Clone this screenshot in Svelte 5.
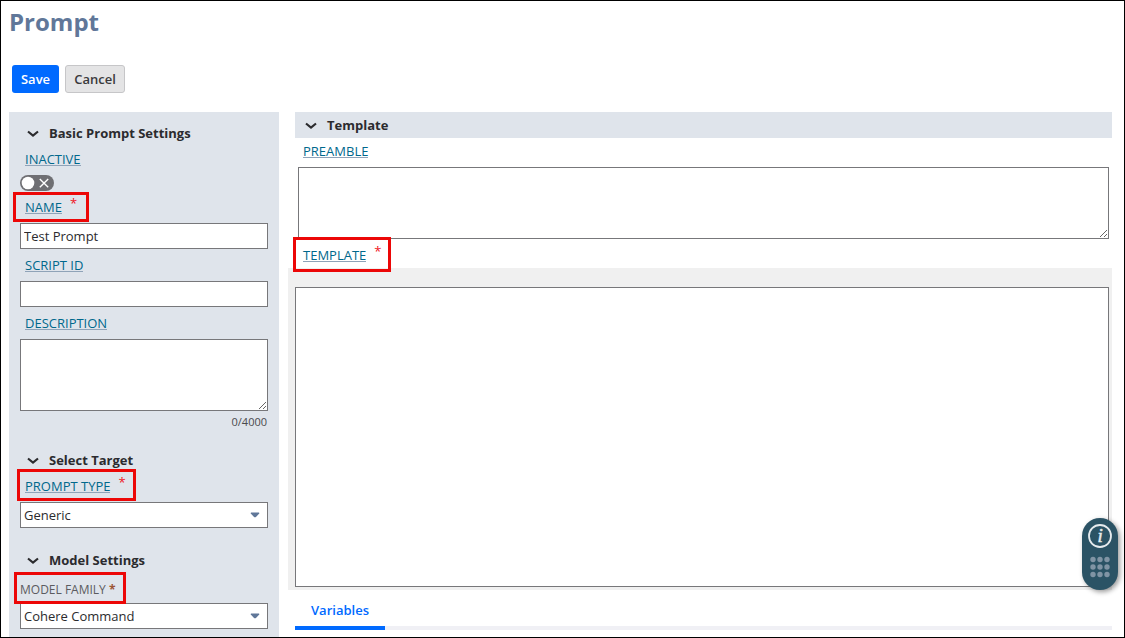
<script>
	let name = $state("Test Prompt");
	let scriptId = $state("");
	let description = $state("");
	let preamble = $state("");
	let template = $state("");
	let inactive = $state(false);
</script>

{#snippet heading(title)}
	<div class="heading">
		<svg class="chevron" width="12" height="8" viewBox="0 0 12 8">
			<path d="M1 1.5 L6 5.5 L11 1.5" fill="none" stroke="#2b2b2e" stroke-width="2.2" />
		</svg>
		<span>{title}</span>
	</div>
{/snippet}

{#snippet select(value)}
	<div class="control select">
		<span>{value}</span>
		<svg width="10" height="6" viewBox="0 0 10 6">
			<path d="M1.2 0.5 H8.8 Q9.8 1 8.8 2 L6.2 4.7 Q5 5.7 3.8 4.7 L1.2 2 Q0.2 1 1.2 0.5 Z" fill="#607799" />
		</svg>
	</div>
{/snippet}

<div class="page">
	<h1>Prompt</h1>

	<div class="buttons">
		<button class="save">Save</button>
		<button class="cancel">Cancel</button>
	</div>

	<div class="columns">
		<aside>
			{@render heading("Basic Prompt Settings")}
			<div class="field">
				<div class="label"><a href="#inactive">INACTIVE</a></div>
				<button class="toggle" aria-label="Inactive" onclick={() => (inactive = !inactive)}>
					<svg width="34" height="16" viewBox="0 0 34 16">
						<circle cx="8" cy="8" r="6.3" fill="#fff" />
						<path d="M19.8 4 L28.2 12.2 M28.2 4 L19.8 12.2" stroke="#fff" stroke-width="1.4" />
					</svg>
				</button>
			</div>
			<div class="field">
				<div class="label">
					<a href="#name">NAME</a><span class="star">*</span>
					<i class="mark mark-name"></i>
				</div>
				<input class="control" bind:value={name} aria-label="Name" />
			</div>
			<div class="field">
				<div class="label"><a href="#script-id">SCRIPT ID</a></div>
				<input class="control" bind:value={scriptId} aria-label="Script ID" />
			</div>
			<div class="field">
				<div class="label"><a href="#description">DESCRIPTION</a></div>
				<textarea bind:value={description} aria-label="Description"></textarea>
				<div class="counter">{description.length}/4000</div>
			</div>

			<section class="target">
				{@render heading("Select Target")}
				<div class="label">
					<a href="#prompt-type">PROMPT TYPE</a><span class="star">*</span>
					<i class="mark mark-type"></i>
				</div>
				{@render select("Generic")}
			</section>

			<section class="model">
				{@render heading("Model Settings")}
				<div class="label plain">
					<span>MODEL FAMILY <b>*</b></span>
					<i class="mark mark-family"></i>
				</div>
				{@render select("Cohere Command")}
			</section>
		</aside>

		<main>
			<div class="bar">{@render heading("Template")}</div>
			<div class="label"><a href="#preamble">PREAMBLE</a></div>
			<textarea class="preamble" bind:value={preamble} aria-label="Preamble"></textarea>
			<div class="label">
				<a href="#template">TEMPLATE</a><span class="star">*</span>
				<i class="mark mark-template"></i>
			</div>
			<div class="editor">
				<textarea bind:value={template} aria-label="Template"></textarea>
			</div>
			<div class="tabs">
				<div class="tab">Variables</div>
			</div>
		</main>
	</div>

	<div class="helper">
		<svg width="36" height="72" viewBox="0 0 36 72">
			<circle cx="18" cy="18" r="11" fill="none" stroke="#e6ebee" stroke-width="1.8" />
			<text x="18.2" y="24" text-anchor="middle">i</text>
			{#each [41.5, 49, 56.5] as cy}
				{#each [11, 18, 25] as cx}
					<circle {cx} {cy} r="2.7" fill="#8094a4" />
				{/each}
			{/each}
		</svg>
	</div>
</div>

<style>
	:global(body) {
		margin: 0;
		background: #fff;
	}

	.page, .page * {
		box-sizing: border-box;
	}

	.page {
		position: relative;
		display: flex;
		flex-direction: column;
		width: 1125px;
		height: 638px;
		border: 1px solid #000;
		padding: 0 12px 0 8px;
		overflow: hidden;
		font-family: "Open Sans", sans-serif;
		font-size: 13px;
		color: #2b2b2e;
	}

	h1 {
		flex: none;
		height: 42px;
		margin: 0;
		font-size: 24px;
		line-height: 42px;
		font-weight: 700;
		color: #607799;
	}

	.buttons {
		flex: none;
		display: flex;
		gap: 6px;
		padding: 22px 0 19px 3px;
	}

	.buttons button {
		height: 28px;
		padding: 0;
		border-radius: 3px;
		font: 600 13px "Open Sans", sans-serif;
	}

	.save {
		width: 47px;
		border: 0;
		background: #006aff;
		color: #fff;
	}

	.buttons .cancel {
		width: 60px;
		border: 1px solid #c6c6c8;
		background: #e4e4e5;
		color: #3a3a3c;
	}

	.columns {
		flex: 1;
		min-height: 0;
		display: flex;
		gap: 9px;
	}

	aside {
		width: 270px;
		padding: 8px 11px 0;
		background: #dfe4eb;
	}

	.heading {
		display: flex;
		align-items: center;
		gap: 10px;
		height: 26px;
		padding-left: 7px;
		font-weight: 700;
	}

	.chevron {
		position: relative;
		top: 1px;
	}

	.field {
		margin-bottom: 3px;
	}

	.label {
		position: relative;
		display: flex;
		align-items: center;
		height: 26px;
		margin-bottom: 3px;
		padding-left: 5px;
		white-space: nowrap;
	}

	.label a {
		height: 14px;
		line-height: 15px;
		border-bottom: 1px solid #8fa3b8;
		color: #00688c;
		font-size: 13px;
		text-decoration: none;
	}

	.star {
		margin: -8px 0 0 8px;
		color: #f0141e;
		font-size: 13px;
	}

	.mark {
		position: absolute;
		border: 3px solid #ec0707;
		pointer-events: none;
	}

	.mark-name {
		left: -7px;
		top: -2px;
		width: 76px;
		height: 30px;
	}

	.mark-type {
		left: -3px;
		top: -4px;
		width: 119px;
		height: 32px;
	}

	.mark-family {
		left: -6px;
		top: -4px;
		width: 112px;
		height: 32px;
	}

	.mark-template {
		left: -2px;
		top: -5px;
		width: 98px;
		height: 35px;
	}

	.toggle {
		display: block;
		width: 34px;
		height: 16px;
		padding: 0;
		border: 0;
		border-radius: 8px;
		background: #6f6f73;
	}

	.toggle svg {
		display: block;
	}

	.control {
		display: block;
		width: 248px;
		height: 26px;
		padding: 0 3px;
		border: 1px solid #77777a;
		border-radius: 0;
		outline: 0;
		background: #fff;
		color: #2b2b2e;
		font: 13px "Open Sans", sans-serif;
	}

	.select {
		display: flex;
		align-items: center;
		justify-content: space-between;
		padding-right: 7px;
	}

	textarea {
		display: block;
		width: 248px;
		height: 72px;
		margin: 0;
		border: 1px solid #77777a;
		outline: 0;
		background: #fff;
	}

	.counter {
		height: 22px;
		padding-right: 1px;
		font-size: 11px;
		line-height: 22px;
		text-align: right;
		color: #4a4a4e;
	}

	.target {
		margin-top: 14px;
	}

	.model {
		margin-top: 19px;
	}

	.label.plain {
		margin: 3px 0 1px;
		padding-left: 0;
		font-size: 12px;
		color: #5b5b60;
	}

	.plain b {
		color: #9c5434;
	}

	main {
		width: 824px;
	}

	.bar {
		margin-left: 7px;
		padding-left: 3px;
		background: #dfe4eb;
	}

	main .label {
		padding-left: 8px;
		margin-left: 7px;
	}

	.preamble {
		width: 811px;
		margin: 0 0 3px 10px;
	}

	.editor {
		height: 322px;
		margin-top: -3px;
		padding: 19px 3px 3px 7px;
		background: #f0f0f0;
	}

	.editor textarea {
		width: 100%;
		height: 300px;
		resize: none;
	}

	.tabs {
		height: 40px;
		margin-left: 7px;
		border-bottom: 4px solid #f0f0f5;
	}

	.tab {
		width: 90px;
		height: 40px;
		border-bottom: 4px solid #006aff;
		color: #006aff;
		font-weight: 600;
		line-height: 40px;
		text-align: center;
	}

	.helper {
		position: absolute;
		left: 1081px;
		top: 517px;
		width: 36px;
		height: 72px;
		border-radius: 18px;
		background: #2b5365;
		box-shadow: 2px 2px 5px rgba(0, 0, 0, 0.4);
	}

	.helper text {
		font: italic 19px "Liberation Serif", serif;
		fill: #e6ebee;
		stroke: #e6ebee;
		stroke-width: 0.5;
	}
</style>
